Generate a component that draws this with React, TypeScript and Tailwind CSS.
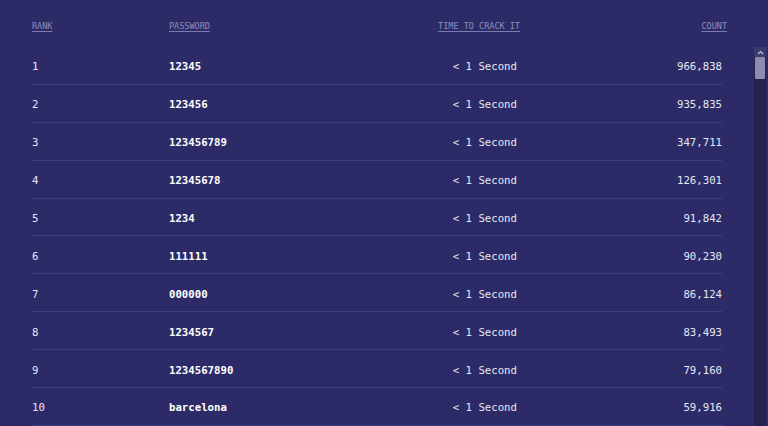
import React from "react";

const rows = [
  { rank: 1, password: "12345", time: "< 1 Second", count: "966,838" },
  { rank: 2, password: "123456", time: "< 1 Second", count: "935,835" },
  { rank: 3, password: "123456789", time: "< 1 Second", count: "347,711" },
  { rank: 4, password: "12345678", time: "< 1 Second", count: "126,301" },
  { rank: 5, password: "1234", time: "< 1 Second", count: "91,842" },
  { rank: 6, password: "111111", time: "< 1 Second", count: "90,230" },
  { rank: 7, password: "000000", time: "< 1 Second", count: "86,124" },
  { rank: 8, password: "1234567", time: "< 1 Second", count: "83,493" },
  { rank: 9, password: "1234567890", time: "< 1 Second", count: "79,160" },
  { rank: 10, password: "barcelona", time: "< 1 Second", count: "59,916" },
];

const headCls = "underline underline-offset-2 decoration-[#7d7cb0]";

export default function App() {
  return (
    <div className="w-[768px] h-[426px] overflow-hidden bg-[#2c2b67] font-['DejaVu_Sans_Mono','Liberation_Mono',monospace] flex flex-col">
      {/* column headings */}
      <div className="h-[47px] shrink-0 pt-[21px] pl-[32px]">
        <div className="grid grid-cols-[137px_200px_151px_207px] text-[8.5px] leading-[10px] text-[#8e8dbd] uppercase">
          <span className={headCls}>Rank</span>
          <span className={headCls}>Password</span>
          <span className={`${headCls} text-right`}>Time to crack it</span>
          <span className={`${headCls} text-right`}>Count</span>
        </div>
      </div>

      <div className="flex flex-1 min-h-0">
        <div className="flex-1 pl-[32px] pr-[32px]">
          {rows.map((r) => (
            <div
              key={r.rank}
              className="grid grid-cols-[137px_200px_148px_205px] h-[37.9px] pt-[4px] items-center border-b border-[#3e3d80] text-[10.7px] text-[#e7e7f2]"
            >
              <span>{r.rank}</span>
              <span className="font-bold text-white">{r.password}</span>
              <span className="text-right whitespace-pre">{r.time}</span>
              <span className="text-right">{r.count}</span>
            </div>
          ))}
        </div>

        {/* scrollbar */}
        <div className="w-[12px] mr-[2px] bg-[#24234f] flex flex-col">
          <div className="h-[10px] bg-[#3a3970] flex items-center justify-center">
            <svg width="7" height="5" viewBox="0 0 7 5">
              <path d="M1 4 L3.5 1.5 L6 4" stroke="#c9c9dc" strokeWidth="1.2" fill="none" />
            </svg>
          </div>
          <div className="h-[22px] mx-[1px] bg-[#8e8daf] rounded-[1px]" />
        </div>
      </div>
    </div>
  );
}
